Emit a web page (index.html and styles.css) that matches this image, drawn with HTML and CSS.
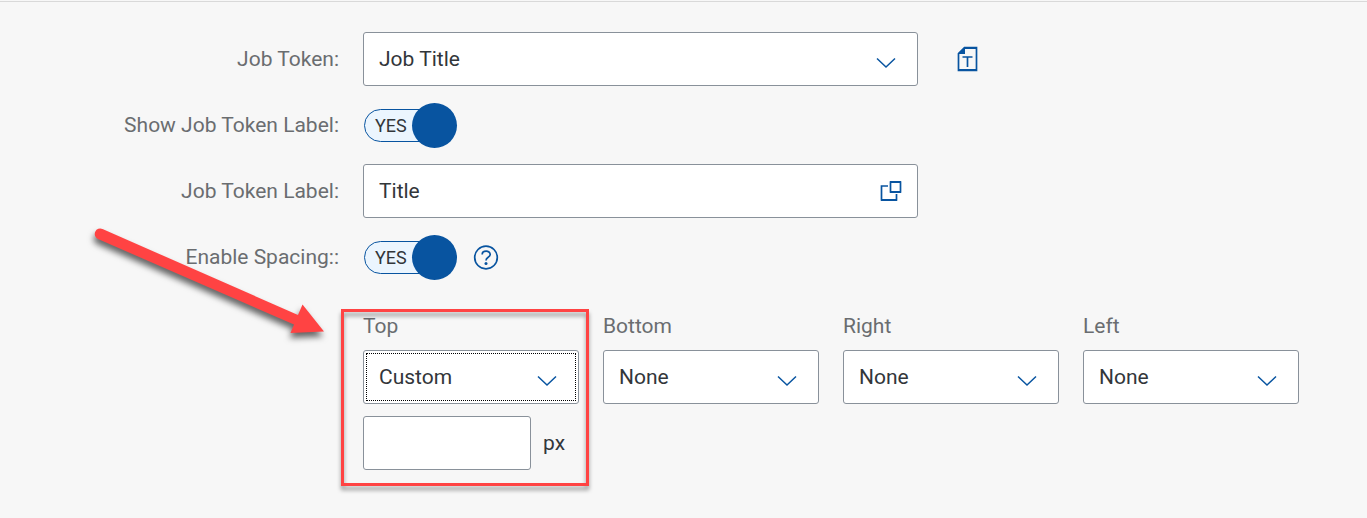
FILE: index.html
```html
<!DOCTYPE html>
<html lang="en">
<head>
    <meta charset="UTF-8">
    <meta name="viewport" content="width=device-width, initial-scale=1.0">
    <title>Job Token</title>
    <link rel="stylesheet" href="styles.css">
</head>
<body>
    <form class="token-form">
        <label class="row-label" for="jobToken">Job Token:</label>
        <div class="row">
            <div class="field">
                <select id="jobToken" class="control">
                    <option>Job Title</option>
                </select>
                <svg class="chevron" viewBox="0 0 20 12"><path d="M1 1.5l9 8.5 9-8.5"/></svg>
            </div>
            <button type="button" class="icon-btn token-btn" aria-label="Text style">
                <svg width="22" height="26" viewBox="0 0 22 26">
                    <path class="fill" d="M1 8L8 1v7z"/>
                    <path class="line" d="M1.5 7.5L7.5 1.5h12v23h-18z"/>
                    <path class="fill" d="M7 1h13v2H7zM1 23h19v2H1z"/>
                    <path class="line" d="M5.5 11h10M10.5 11v10"/>
                </svg>
            </button>
        </div>

        <label class="row-label" for="showLabel">Show Job Token Label:</label>
        <div class="row">
            <div class="switch">
                <input type="checkbox" id="showLabel" class="switch-input" checked>
                <span class="switch-track">YES</span>
                <span class="switch-knob"></span>
            </div>
        </div>

        <label class="row-label" for="tokenLabel">Job Token Label:</label>
        <div class="row">
            <div class="field">
                <input type="text" id="tokenLabel" class="control" value="Title">
                <button type="button" class="icon-btn popup-btn" aria-label="Translations">
                    <svg width="22" height="22" viewBox="0 0 22 22">
                        <path class="line" d="M8 6H1.5v14h15v-6"/>
                        <path class="line" d="M10.500 2h10v10h-10z"/>
                        <path class="fill" d="M10 1h11v2H10zM10 11h11v2H10zM1 19h16v2H1z"/>
                    </svg>
                </button>
            </div>
        </div>

        <label class="row-label" for="enableSpacing">Enable Spacing::</label>
        <div class="row">
            <div class="switch">
                <input type="checkbox" id="enableSpacing" class="switch-input" checked>
                <span class="switch-track">YES</span>
                <span class="switch-knob"></span>
            </div>
            <button type="button" class="icon-btn help-btn" aria-label="Help">
                <svg width="26" height="26" viewBox="0 0 26 26">
                    <circle class="line" cx="13" cy="13.5" r="11.3"/>
                    <path class="line" d="M9.2 10.5c0-4.400 8-4.400 8 0 0 3-4.200 2.600-4.200 6"/>
                    <circle class="fill" cx="13" cy="19.5" r="1.5"/>
                </svg>
            </button>
        </div>

        <div class="spacing">
            <div class="side">
                <label class="side-label" for="top">Top</label>
                <div class="side-field focused">
                    <select id="top" class="control">
                        <option>Custom</option>
                    </select>
                    <svg class="chevron" viewBox="0 0 20 12"><path d="M1 1.5l9 8.5 9-8.5"/></svg>
                </div>
                <div class="custom">
                    <input type="text" id="topPx" class="control custom-input">
                    <label for="topPx">px</label>
                </div>
                <div class="highlight"></div>
                <svg class="arrow" width="240" height="120" viewBox="0 0 240 120">
                    <path d="M22.500 9L218 95L222.500 84.500L244 111.500L210.500 113L214 104.500L18 19A5.300 5.300 0 0 1 22.500 9z"/>
                </svg>
            </div>
            <div class="side">
                <label class="side-label" for="bottom">Bottom</label>
                <div class="side-field">
                    <select id="bottom" class="control">
                        <option>None</option>
                    </select>
                    <svg class="chevron" viewBox="0 0 20 12"><path d="M1 1.5l9 8.5 9-8.5"/></svg>
                </div>
            </div>
            <div class="side">
                <label class="side-label" for="right">Right</label>
                <div class="side-field">
                    <select id="right" class="control">
                        <option>None</option>
                    </select>
                    <svg class="chevron" viewBox="0 0 20 12"><path d="M1 1.5l9 8.5 9-8.5"/></svg>
                </div>
            </div>
            <div class="side">
                <label class="side-label" for="left">Left</label>
                <div class="side-field">
                    <select id="left" class="control">
                        <option>None</option>
                    </select>
                    <svg class="chevron" viewBox="0 0 20 12"><path d="M1 1.5l9 8.5 9-8.5"/></svg>
                </div>
            </div>
        </div>
    </form>
</body>
</html>
```
FILE: styles.css
```css
* {
    box-sizing: border-box;
}
body {
    margin: 0;
    padding-top: 1px;
    background: #f7f7f7;
    color: #32363a;
    font-family: Roboto, sans-serif;
    font-size: 21px;
    line-height: 24px;
}
.token-form {
    display: grid;
    grid-template-columns: 339fr 936fr;
    column-gap: 24px;
    row-gap: 12px;
    padding: 30px 68px 30px 0;
    border-top: 1px solid #d9d9d9;
}
.row-label {
    align-self: center;
    text-align: right;
    color: #6a6d70;
}
.row {
    display: flex;
    align-items: center;
    height: 54px;
}
.field {
    position: relative;
    flex: 0 1 555px;
}
.control {
    display: block;
    width: 100%;
    height: 54px;
    padding: 0 15px;
    border: 1px solid #89919a;
    border-radius: 3px;
    background: #fff;
    color: #32363a;
    font: inherit;
    appearance: none;
    outline: none;
}
.chevron {
    position: absolute;
    right: 22px;
    top: 25px;
    width: 20px;
    height: 12px;
    fill: none;
    stroke: #0854a0;
    stroke-width: 1.5;
    pointer-events: none;
}
.icon-btn {
    display: flex;
    padding: 0;
    border: none;
    background: none;
    cursor: pointer;
}
.line {
    fill: none;
    stroke: #0854a0;
    stroke-width: 1.7;
}
.fill {
    fill: #0854a0;
}
.token-btn {
    margin-left: 39px;
}
.popup-btn {
    position: absolute;
    right: 16px;
    top: 16px;
}
.help-btn {
    margin-left: 16px;
}

/* switches */
.switch {
    position: relative;
    display: flex;
    align-items: center;
    width: 94px;
    height: 45px;
    padding-left: 1px;
}
.switch-input {
    position: absolute;
    inset: 0;
    z-index: 1;
    width: 100%;
    height: 100%;
    margin: 0;
    opacity: 0;
    cursor: pointer;
}
.switch-track {
    width: 80px;
    height: 33px;
    padding-left: 10px;
    border: 1px solid #0854a0;
    border-radius: 17px;
    background: #ebf5fe;
    font-size: 18px;
    line-height: 31px;
}
.switch-knob {
    position: absolute;
    right: 0;
    top: 0;
    width: 45px;
    height: 45px;
    border-radius: 50%;
    background: #0854a0;
}

/* spacing settings */
.spacing {
    grid-column: 2;
    display: grid;
    grid-template-columns: repeat(4, 1fr);
    gap: 24px;
    padding-top: 18px;
}
.side {
    position: relative;
}
.side-label {
    display: block;
    margin-bottom: 12px;
    color: #6a6d70;
}
.side-field {
    position: relative;
}
.focused::after {
    content: "";
    position: absolute;
    inset: 3px;
    border: 1px dotted #000;
    pointer-events: none;
}
.custom {
    display: flex;
    align-items: center;
    gap: 12px;
    margin-top: 12px;
}
.custom-input {
    width: 168px;
}
.highlight {
    position: absolute;
    inset: -5px -10px -16px -22px;
    border: 3px solid #ff4343;
    filter: drop-shadow(0 4px 2px rgba(0, 0, 0, 0.4));
    pointer-events: none;
}
.arrow {
    position: absolute;
    left: -283px;
    top: -94px;
    overflow: visible;
    fill: #ff4343;
    filter: drop-shadow(-1px 5px 3px rgba(0, 0, 0, 0.6));
    pointer-events: none;
}
```
